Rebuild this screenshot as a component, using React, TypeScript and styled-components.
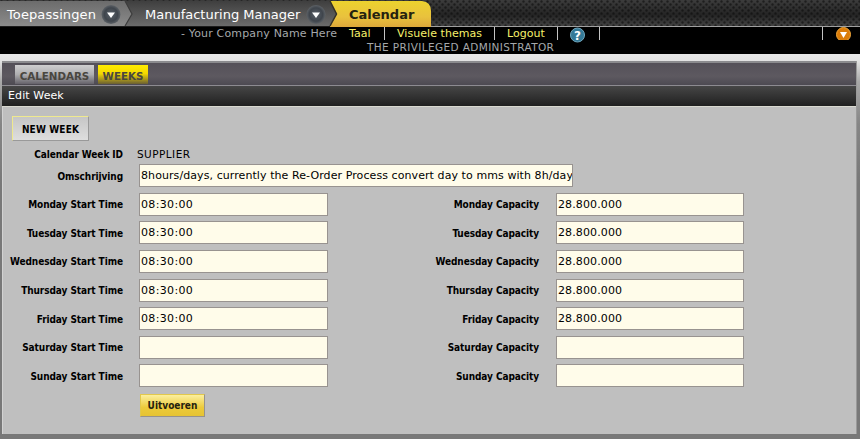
import React from "react";
import styled, { createGlobalStyle } from "styled-components";

const Global = createGlobalStyle`
  * { box-sizing: border-box; }
  body { margin: 0; background: #797979; overflow: hidden; font-family: "DejaVu Sans", Verdana, sans-serif; font-size: 11px; color: #000; }
`;

const Page = styled.div`
  width: 860px;
  height: 439px;
  display: flex;
  flex-direction: column;
`;

const NavBar = styled.nav`
  position: relative;
  flex: none;
  height: 27px;
  display: flex;
  background: #222;
`;

const NavArt = styled.svg`
  position: absolute;
  inset: 0;
`;

const NavItem = styled.a<{ $w: number; $pad: number; $fit: string; $dark?: boolean }>`
  position: relative;
  width: ${(p) => p.$w}px;
  padding-left: ${(p) => p.$pad}px;
  line-height: 29px;
  font-size: 13px;
  letter-spacing: ${(p) => p.$fit};
  white-space: nowrap;
  color: ${(p) => (p.$dark ? "#25220f" : "#fff")};
  font-weight: ${(p) => (p.$dark ? "bold" : "normal")};
`;

const InfoBar = styled.header`
  flex: none;
  height: 27px;
  display: flex;
  background: #000;
  color: #a5a8ab;
  font-size: 11px;
`;

const Company = styled.div`
  width: 341px;
  padding-left: 181px;
  line-height: 14px;
  letter-spacing: 0.16px;
  white-space: nowrap;
`;

const UserBlock = styled.div`
  width: 482px;
`;

const Links = styled.div`
  display: flex;
  height: 13px;
  margin-bottom: 1px;
`;

const Link = styled.a<{ $w: number; $pad?: number }>`
  width: ${(p) => p.$w}px;
  height: 13px;
  padding-left: ${(p) => p.$pad ?? 0}px;
  border-right: 1px solid #c4c4c4;
  line-height: 14px;
  letter-spacing: 0.05px;
  color: #f6f06a;
  white-space: nowrap;
`;

const HelpIcon = styled.svg`
  display: block;
`;

const UserName = styled.div`
  padding-left: 26px;
  line-height: 13px;
  font-size: 10.5px;
  letter-spacing: 0.38px;
  white-space: nowrap;
`;

const Expand = styled.div`
  width: 37px;
  padding-left: 13px;
  height: 13px;
  overflow: hidden;
`;

const Frame = styled.main`
  flex: 1;
  padding: 7px 3px 5px 2px;
  background: linear-gradient(#e7e7e7 0, #e2e2e2 7px, #a8a8a8 28px, #858585 70px, #787878 130px);
`;

const Panel = styled.section`
  height: 373px;
  display: flex;
  flex-direction: column;
  background: #bfbfbf;
  border-left: 1px solid #d2d2d2;
  border-right: 1px solid #999;
`;

const Tabs = styled.div`
  height: 25px;
  display: flex;
  gap: 4px;
  padding: 2px 0 0 13px;
  margin-left: -1px;
  border-top: 2px solid #8b8b8e;
  border-bottom: 1px solid #8d8b91;
  background: linear-gradient(#555159, #5d5960 60%, #4d4a52);
`;

const Tab = styled.a<{ $active?: boolean; $w: number }>`
  width: ${(p) => p.$w}px;
  height: 19px;
  line-height: 22px;
  text-align: center;
  font-weight: bold;
  font-size: 10.3px;
  white-space: nowrap;
  color: #49463f;
  background: ${(p) =>
    p.$active
      ? "linear-gradient(#ffec00, #f4d900 45%, #6a5f33)"
      : "linear-gradient(#cfcfcf, #aeaeb0 50%, #65626a)"};
`;

const Title = styled.h1`
  height: 21px;
  margin: 0 0 0 -1px;
  padding-left: 6px;
  border-bottom: 1px solid #d9d9d0;
  background: linear-gradient(#464646, #202020);
  color: #fff;
  font-size: 11px;
  font-weight: normal;
  line-height: 19px;
  letter-spacing: 0.1px;
`;

const NewButton = styled.button`
  display: block;
  width: 77px;
  height: 25px;
  margin: 9px 0 0 9px;
  padding: 2px 0 0;
  border: 1px solid #999;
  border-top-color: #efe98e;
  border-left-color: #efe98e;
  background: linear-gradient(#c6c6c6, #dedede);
  font: bold 10px "DejaVu Sans Condensed", "DejaVu Sans", sans-serif;
  letter-spacing: 0.15px;
  white-space: nowrap;
`;

const Row = styled.div<{ $h: number }>`
  display: grid;
  grid-template-columns: 120px 435px;
  column-gap: 16px;
  height: ${(p) => p.$h}px;
`;

const WeekRow = styled(Row)`
  grid-template-columns: 120px 189px 196px 188px;
`;

const Label = styled.label<{ $top?: number; $inset?: number }>`
  padding-top: ${(p) => p.$top ?? 6}px;
  padding-right: ${(p) => p.$inset ?? 0}px;
  text-align: right;
  white-space: nowrap;
  font: bold 10px/13px "DejaVu Sans Condensed", "DejaVu Sans", sans-serif;
  letter-spacing: -0.08px;
`;

const Value = styled.span`
  margin-left: -2px;
  padding-top: 7px;
  font-size: 10.5px;
  line-height: 13px;
  letter-spacing: 0.45px;
`;

const Field = styled.input<{ $w?: number; $fit?: number }>`
  width: ${(p) => p.$w ?? 189}px;
  height: 23px;
  padding: 0 0 0 1px;
  border: 1px solid #989390;
  border-radius: 0;
  background: #fffcea;
  outline: none;
  font: 11px "DejaVu Sans", Verdana, sans-serif;
  letter-spacing: ${(p) => p.$fit ?? 0}px;
  color: #000;
`;

const Submit = styled.button`
  width: 65px;
  height: 23px;
  margin: 1px 0 0 137px;
  padding: 0;
  border: 1px solid #e2c84c;
  border-right-color: #97928a;
  border-bottom-color: #97928a;
  background: linear-gradient(#fbef9e, #ecca3a 60%, #e6c333);
  color: #25220f;
  font: bold 10px "DejaVu Sans Condensed", "DejaVu Sans", sans-serif;
`;

const days: [string, string, string, number, number][] = [
  ["Monday", "08:30:00", "28.800.000", 28, 5],
  ["Tuesday", "08:30:00", "28.800.000", 29, 6],
  ["Wednesday", "08:30:00", "28.800.000", 29, 5],
  ["Thursday", "08:30:00", "28.800.000", 28, 5],
  ["Friday", "08:30:00", "28.800.000", 29, 6],
  ["Saturday", "", "", 28, 5],
  ["Sunday", "", "", 29, 6],
];

function NavDrawing() {
  return (
    <NavArt width="860" height="27">
      <defs>
        <pattern id="mesh" width="6" height="6" patternUnits="userSpaceOnUse">
          <circle cx="1.500" cy="1.500" r="1.200" fill="#0c0c0c" fillOpacity=".6" />
          <circle cx="4.500" cy="4.500" r="1.200" fill="#0c0c0c" fillOpacity=".6" />
        </pattern>
        <linearGradient id="back" x1="0" y1="0" x2="0" y2="1">
          <stop offset="0" stopColor="#3c3c3c" />
          <stop offset=".55" stopColor="#242424" />
          <stop offset="1" stopColor="#454545" />
        </linearGradient>
        <linearGradient id="light" x1="0" y1="0" x2="0" y2="1">
          <stop offset="0" stopColor="#6c6c6c" />
          <stop offset="1" stopColor="#8b8b8b" />
        </linearGradient>
        <linearGradient id="dark" x1="0" y1="0" x2="0" y2="1">
          <stop offset="0" stopColor="#3f3f3f" />
          <stop offset="1" stopColor="#6b6b6b" />
        </linearGradient>
        <linearGradient id="gold" x1="0" y1="0" x2="0" y2="1">
          <stop offset="0" stopColor="#ecd22e" />
          <stop offset=".6" stopColor="#e9c23d" />
          <stop offset="1" stopColor="#dda83a" />
        </linearGradient>
        <radialGradient id="knob">
          <stop offset="0" stopColor="#59616a" />
          <stop offset=".7" stopColor="#3f454c" />
          <stop offset="1" stopColor="#5d6267" />
        </radialGradient>
      </defs>
      <rect width="860" height="27" fill="url(#back)" />
      <rect width="860" height="26" fill="url(#mesh)" />
      <rect y="26" width="860" height="1" fill="#a0a0a0" />
      <path d="M330 1H422Q431 2 431 11V27H330Z" fill="url(#gold)" />
      <path d="M125 1H330L337 14L330 26H125Z" fill="url(#dark)" />
      <path d="M330 1L336.500 14L330 26" fill="none" stroke="#353126" strokeWidth="1.500" />
      <path d="M0 1H125L132 14L125 26H0Z" fill="url(#light)" />
      <path d="M125 1L132 14L125 26" fill="none" stroke="#3c3c3c" strokeWidth="1.200" />
      <rect y="26" width="330" height="1" fill="#1c1c1c" />
      {[111, 316].map((x) => (
        <g key={x}>
          <circle cx={x} cy="14.500" r="9.500" fill="url(#knob)" />
          <path d={`M${x - 4} 12.500H${x + 4}L${x} 18Z`} fill="#fff" />
        </g>
      ))}
    </NavArt>
  );
}

export default function App() {
  return (
    <>
      <Global />
      <Page>
        <NavBar>
          <NavDrawing />
          <NavItem $w={132} $pad={7} $fit="0.1px">Toepassingen</NavItem>
          <NavItem $w={205} $pad={13} $fit="0">Manufacturing Manager</NavItem>
          <NavItem $w={94} $pad={12} $fit="0" $dark>Calendar</NavItem>
        </NavBar>
        <InfoBar>
          <Company>- Your Company Name Here</Company>
          <UserBlock>
            <Links>
              <Link $w={44} $pad={8}>Taal</Link>
              <Link $w={110} $pad={12}>Visuele themas</Link>
              <Link $w={63} $pad={12}>Logout</Link>
              <Link $w={42} $pad={11}>
                <HelpIcon width="18" height="17">
                  <circle cx="8.500" cy="8" r="7" fill="#347997" stroke="#70a7be" />
                  <text x="8.500" y="12.500" textAnchor="middle" fontSize="12" fontWeight="bold" fill="#fff">?</text>
                </HelpIcon>
              </Link>
              <Link as="span" $w={223} />
            </Links>
            <UserName>THE PRIVILEGED ADMINISTRATOR</UserName>
          </UserBlock>
          <Expand>
            <svg width="16" height="16">
              <circle cx="7.500" cy="7.500" r="7" fill="#db7c08" stroke="#f0a73c" />
              <path d="M4 5H11L7.500 11Z" fill="#fff" />
            </svg>
          </Expand>
        </InfoBar>
        <Frame>
          <Panel>
            <Tabs>
              <Tab $w={79}>CALENDARS</Tab>
              <Tab $w={50} $active>WEEKS</Tab>
            </Tabs>
            <Title>Edit Week</Title>
            <NewButton>NEW WEEK</NewButton>
            <Row $h={23}>
              <Label $top={7}>Calendar Week ID</Label>
              <Value>SUPPLIER</Value>
            </Row>
            <Row $h={29}>
              <Label>Omschrijving</Label>
              <Field $w={434} $fit={0.08} readOnly value="8hours/days, currently the Re-Order Process convert day to mms with 8h/days" />
            </Row>
            {days.map(([day, start, cap, h, top]) => (
              <WeekRow $h={h} key={day}>
                <Label $top={top}>{day} Start Time</Label>
                <Field $fit={0.35} readOnly value={start} />
                <Label $top={top} $inset={1}>{day} Capacity</Label>
                <Field $w={188} $fit={0.12} readOnly value={cap} />
              </WeekRow>
            ))}
            <Submit>Uitvoeren</Submit>
          </Panel>
        </Frame>
      </Page>
    </>
  );
}
